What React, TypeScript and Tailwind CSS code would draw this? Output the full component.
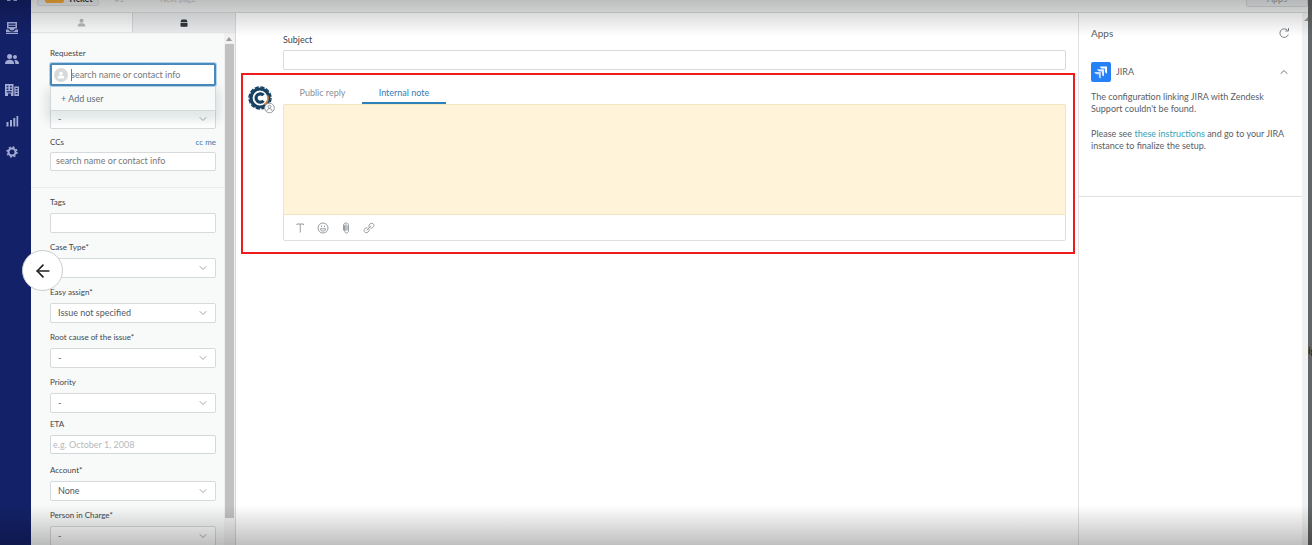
import { ReactNode } from "react";
import { ArrowLeft, ChevronDown, ChevronUp } from "lucide-react";

const boxStyle =
  "block w-full rounded-[2px] border border-[#d6dadd] bg-white text-[9px] text-[#53595e] outline-none placeholder:text-[#74797d]";

function NavIcon({ label, children }: { label: string; children: ReactNode }) {
  return (
    <a href="#" aria-label={label} className="flex h-[31px] w-6 shrink-0 items-center justify-center">
      <svg viewBox="0 0 14 14" className="size-[14px]" fill="currentColor">
        {children}
      </svg>
    </a>
  );
}

function SideNav() {
  return (
    <nav className="flex w-[31px] shrink-0 flex-col bg-[#132168] text-[#a3abd3]">
      <div className="flex h-3 flex-col justify-end overflow-hidden">
        <NavIcon label="Home">
          <path d="M7 0l7 6h-2v5H8.500V7h-3v4H2V6H0z" />
        </NavIcon>
      </div>
      <NavIcon label="Views">
        <path
          fillRule="evenodd"
          d="M2 1h10v6.500H9.800a3 3 0 0 1-5.600 0H2zM3.500 2.500v1.200h7V2.500zm0 2.300V6h7V4.800zM1 8.600h2.300a4.200 4.200 0 0 0 7.400 0H13V11H1zM1 11.800h12V13H1z"
        />
      </NavIcon>
      <NavIcon label="Customers">
        <circle cx="4.600" cy="4.500" r="2.500" />
        <path d="M0 12c0-3 2-4.300 4.600-4.300S9.200 9 9.200 12z" />
        <circle cx="10" cy="5" r="2" />
        <path d="M9.600 8c2.700-.3 4.400 1 4.400 4h-3.700c0-1.700-.2-2.900-1.300-3.900z" />
      </NavIcon>
      <NavIcon label="Organizations">
        <path
          fillRule="evenodd"
          d="M0 1h8.500v12H6v-2.500H3V13H0zm1.700 1.700v1.500h1.700V2.700zm3.300 0v1.500h1.700V2.700zM1.700 5.500V7h1.700V5.500zm3.300 0V7h1.700V5.500zM1.700 8.200v1.200h5V8.200zM9.300 3.500H14V13H9.300zm1.300 1.400v1.300h2V4.900zm0 2.500v1.300h2V7.400zm0 2.500v1.400h2V9.900z"
        />
      </NavIcon>
      <NavIcon label="Reporting">
        <path d="M1.500 8h2v4.500h-2zM5 6h2v6.500H5zM8.300 4h2v8.500h-2zM11.500 2h1.700v10.500h-1.700z" />
      </NavIcon>
      <NavIcon label="Admin">
        <g fill="none" stroke="currentColor">
          <circle cx="7" cy="7" r="3.500" strokeWidth="2" />
          <circle cx="7" cy="7" r="4.900" strokeWidth="1.600" strokeDasharray="1.925 1.925" />
        </g>
      </NavIcon>
    </nav>
  );
}

function TopBar() {
  return (
    <header className="flex h-[13px] shrink-0 items-end justify-between overflow-hidden border-b border-[#d8d9da] bg-[#f2f3f3]">
      <div className="flex items-end gap-4 pb-[6px] pl-[6px]">
        <div className="flex h-6 items-end gap-1 rounded-[2px] border border-[#dadcde] bg-[#e9ebec] pr-[5px] pb-[2px] pl-[7px]">
          <span className="h-4 w-[19px] rounded-[2px] bg-[#f5ab36]" />
          <span className="text-[9px] leading-[9px] font-bold text-[#33393d]">Ticket</span>
        </div>
        <span className="pb-[3px] text-[8px] leading-[8px] text-[#c3c6c8]">#1</span>
        <span className="pb-[3px] pl-5 text-[8px] leading-[8px] text-[#c3c6c8]">Next page</span>
      </div>
      <button className="mb-[5px] flex h-6 w-[62px] items-end justify-center rounded-[2px] border border-[#d3d6d8] bg-[#e9ebec] pb-[3px] text-[9px] leading-[9px] text-[#9a9ea1]">
        Apps
      </button>
    </header>
  );
}

function FieldLabel({ htmlFor, children }: { htmlFor: string; children: ReactNode }) {
  return (
    <label htmlFor={htmlFor} className="block text-[8px] leading-3 text-[#3f464b]">
      {children}
    </label>
  );
}

function SelectBox({ id, value, label }: { id: string; value: string; label?: string }) {
  return (
    <div className="relative">
      <select id={id} aria-label={label} className={`${boxStyle} h-5 appearance-none px-[7px]`}>
        <option>{value}</option>
      </select>
      <ChevronDown
        className="pointer-events-none absolute top-1 right-[7px] size-3 text-[#82898d]"
        strokeWidth={1.5}
      />
    </div>
  );
}

function SelectField({ id, label, value }: { id: string; label: string; value: string }) {
  return (
    <div className="flex flex-col gap-[5px] pt-2">
      <FieldLabel htmlFor={id}>{label}</FieldLabel>
      <SelectBox id={id} value={value} />
    </div>
  );
}

function PersonGlyph({ className }: { className: string }) {
  return (
    <svg viewBox="0 0 10 10" className={className} fill="currentColor">
      <circle cx="5" cy="3" r="2.200" />
      <path d="M1 9.500V8c0-1.500 1.300-2 3-2.300h2C7.700 6 9 6.500 9 8v1.500z" />
    </svg>
  );
}

function TicketFields() {
  return (
    <aside className="flex w-[205px] shrink-0 flex-col border-r border-[#d5d7d9] bg-[#f8f9f9]">
      <div className="flex h-5 shrink-0 border-b border-[#e4e6e7]">
        <button aria-label="Requester tab" className="flex w-[101px] items-center justify-center text-[#b5b8ba]">
          <PersonGlyph className="size-[9px]" />
        </button>
        <button
          aria-label="Ticket tab"
          className="flex flex-1 items-center justify-center border-l border-[#d3d6d8] bg-[#e9ebed] text-[#30363a]"
        >
          <svg viewBox="0 0 8 8" className="size-2" fill="currentColor">
            <path d="M1.500 .5h5L7.500 3h-7zM.5 3.700h7v3.300a.7.700 0 0 1-.7.700H1.200a.7.700 0 0 1-.7-.7z" />
          </svg>
        </button>
      </div>

      <div className="flex min-h-0 flex-1">
        <form className="min-w-0 flex-1 overflow-hidden">
          <div className="border-b border-[#ebeced] pt-[14px] pr-2 pb-4 pl-[19px]">
            <FieldLabel htmlFor="requester">Requester</FieldLabel>
            <div className="relative mt-1">
              <input
                id="requester"
                placeholder="search name or contact info"
                className="block h-[23px] w-full rounded-[2px] border-2 border-[#4a88ba] bg-white pl-[19px] text-[9px] shadow-[0_0_0_1px_#b3d4ee] outline-none placeholder:text-[#74797d]"
              />
              <span className="absolute top-[5px] left-1 flex size-[14px] items-center justify-center rounded-full bg-[#d8d9da] text-white">
                <PersonGlyph className="size-2" />
              </span>
              <span className="absolute top-[6px] left-[21px] h-3 w-px bg-[#73797d]" />
              <button
                type="button"
                className="absolute top-6 right-0 left-0 z-10 flex h-6 items-center rounded-b-[2px] border border-t-0 border-[#d3d7da] bg-[#f8f9f9] px-[10px] text-[9px] text-[#626d76] shadow-[0_6px_10px_4px_rgba(40,80,85,0.13)]"
              >
                + Add user
              </button>
            </div>
            <div className="pt-[23px]">
              <SelectBox id="assignee" label="Assignee" value="-" />
            </div>
            <div className="flex justify-between pt-[7px]">
              <FieldLabel htmlFor="ccs">CCs</FieldLabel>
              <a href="#" className="text-[8px] leading-3 text-[#3a78ad]">
                cc me
              </a>
            </div>
            <input
              id="ccs"
              placeholder="search name or contact info"
              className={`${boxStyle} mt-1 h-[19px] px-[5px] pb-[2px]`}
            />
          </div>

          <div className="pr-2 pl-[19px]">
            <div className="flex flex-col gap-[5px] pt-2">
              <FieldLabel htmlFor="tags">Tags</FieldLabel>
              <input id="tags" className={`${boxStyle} h-5 px-[5px]`} />
            </div>
            <SelectField id="case-type" label="Case Type*" value="" />
            <SelectField id="easy-assign" label="Easy assign*" value="Issue not specified" />
            <SelectField id="root-cause" label="Root cause of the issue*" value="-" />
            <SelectField id="priority" label="Priority" value="-" />
            <div className="flex flex-col gap-[5px] pt-[5px] pb-[2px]">
              <FieldLabel htmlFor="eta">ETA</FieldLabel>
              <input
                id="eta"
                placeholder="e.g. October 1, 2008"
                className="block h-[19px] w-full rounded-[2px] border border-[#d3d7da] bg-white px-[2px] text-[9px] outline-none placeholder:text-[#b6babd]"
              />
            </div>
            <SelectField id="account" label="Account*" value="None" />
            <SelectField id="person" label="Person in Charge*" value="-" />
          </div>
        </form>

        <div className="flex w-[11px] shrink-0 flex-col items-center bg-[#f1f1f1] pr-px">
          <span className="mt-1 mb-[3px] border-x-[3px] border-b-4 border-x-transparent border-b-[#9b9b9b]" />
          <span className="mb-[27px] w-[9px] flex-1 bg-[#c1c1c1]" />
        </div>
      </div>
    </aside>
  );
}

function AgentAvatar() {
  return (
    <svg viewBox="0 0 27 28" className="h-7 w-[27px] shrink-0">
      <circle cx="12" cy="12" r="9" fill="#fff" stroke="#174260" strokeWidth="3.200" />
      <circle cx="12" cy="12" r="11" fill="none" stroke="#174260" strokeWidth="1.400" strokeDasharray="4.200 1.560" />
      <path d="M19.500 9.500a8 8 0 0 1-3 9" fill="none" stroke="#e08a3c" strokeWidth="1.600" />
      <path d="M15.500 9.300a4.200 4.200 0 1 0 0 5.400" fill="none" stroke="#174260" strokeWidth="3.200" />
      <circle cx="21.500" cy="22" r="4.800" fill="#fff" stroke="#8b9196" strokeWidth=".9" />
      <circle cx="21.500" cy="20.700" r="1.500" fill="none" stroke="#777e83" strokeWidth=".8" />
      <path d="M18.900 25c.2-3.200 5-3.200 5.200 0" fill="none" stroke="#777e83" strokeWidth=".8" />
    </svg>
  );
}

function ToolButton({ label, children }: { label: string; children: ReactNode }) {
  return (
    <button aria-label={label} className="flex size-3 items-center justify-center">
      <svg viewBox="0 0 12 12" className="size-3" fill="none" stroke="currentColor" strokeWidth=".9">
        {children}
      </svg>
    </button>
  );
}

function Conversation() {
  return (
    <main className="min-w-0 flex-1 bg-white pr-[3px] pl-[5px]">
      <div className="flex flex-col gap-1 pt-[21px] pr-[9px] pb-[3px] pl-[42px]">
        <label htmlFor="subject" className="text-[9px] leading-3 text-[#3f464b]">
          Subject
        </label>
        <input id="subject" className={`${boxStyle} h-5 px-2`} />
      </div>

      <section className="flex gap-2 border-2 border-[#f01b1d] pt-2 pr-[7px] pb-[11px] pl-[5px]">
        <div className="pt-[3px]">
          <AgentAvatar />
        </div>
        <div className="min-w-0 flex-1">
          <div className="flex h-[21px] text-[9px]">
            <button className="w-[79px] pb-px text-[#8a9094]">Public reply</button>
            <button className="w-[84px] border-b-2 border-[#2f7fb8] text-[#347bb8]">Internal note</button>
          </div>
          <div className="rounded-[2px] border border-[#dcdfe1]">
            <textarea
              aria-label="Internal note"
              className="-mx-px -mt-px block h-[111px] w-[calc(100%+2px)] resize-none rounded-t-[2px] border border-[#f1e4c0] bg-[#fff4d9] outline-none"
            />
            <div className="flex h-[25px] items-center gap-[11px] px-[10px] text-[#8b9196]">
              <ToolButton label="Text style">
                <path d="M3 3V2h6.500v1M6.250 2v8.500" />
              </ToolButton>
              <ToolButton label="Emoji">
                <circle cx="6" cy="6" r="5" />
                <path d="M3.200 6.800c.6 3 5 3 5.600 0zM4.500 3.500v1.700M7.500 3.500v1.700" />
              </ToolButton>
              <ToolButton label="Attach file">
                <path d="M3.500 8.500V3.200C3.500.2 8.500.2 8.500 3.200v5.300c0 3.300-4 3.300-4 0V4c0-1.700 2.600-1.700 2.600 0v4.500M5.800 4v5" />
              </ToolButton>
              <ToolButton label="Insert link">
                <path d="M6.300 5.500c-1-1.300-.5-2.300.7-3.500 2.200-2.200 5.400.8 3.300 3C9.500 6 8.700 6.500 7.500 6M5.700 6.500c1 1.300.5 2.300-.7 3.500-2.200 2.200-5.400-.8-3.300-3C2.500 6 3.300 5.500 4.500 6M3.800 8.200l4.400-4.400" />
              </ToolButton>
            </div>
          </div>
        </div>
      </section>
    </main>
  );
}

function JiraLogo() {
  return (
    <svg viewBox="0 0 20 20" className="size-5">
      <rect width="20" height="20" rx="2" fill="#2581f7" />
      <g fill="#fff">
        <path d="M9 4.500h7v7c-1.500-.3-2.100-1.200-2.100-2.500V6.600h-2.400C10.200 6.600 9.300 6 9 4.500z" />
        <path d="M6.200 7.300H13v6.900c-1.500-.3-2.100-1.200-2.100-2.500V9.400H8.700C7.400 9.400 6.500 8.800 6.200 7.300z" opacity=".85" />
        <path d="M3.400 10.100h6.400v6.500c-1.300-.3-1.900-1.200-1.900-2.300v-2.100H5.800c-1.300 0-2.100-.7-2.400-2.100z" opacity=".75" />
      </g>
    </svg>
  );
}

function AppsPanel() {
  return (
    <aside className="w-[224px] shrink-0 border-l border-[#dfe1e3] bg-white text-[#5a6065]">
      <div className="border-b border-[#dfe1e3] pt-[13px] pr-3 pb-[44px] pl-3">
        <div className="flex items-center justify-between">
          <h2 className="text-[10px] leading-[14px]">Apps</h2>
          <button aria-label="Reload apps" className="text-[#7b8286]">
            <svg viewBox="0 0 12 12" className="size-3" fill="none" stroke="currentColor">
              <path d="M10.300 7.500a4.300 4.300 0 1 1-.8-4.200M10.500 1v3H7.300" />
            </svg>
          </button>
        </div>
        <div className="flex items-center gap-[5px] pt-[22px]">
          <JiraLogo />
          <h3 className="flex-1 text-[9px]">JIRA</h3>
          <button aria-label="Collapse JIRA">
            <ChevronUp className="size-3 text-[#6d7478]" />
          </button>
        </div>
        <div className="flex flex-col gap-[13px] pt-[9px] text-[9px] leading-3">
          <p>
            The configuration linking JIRA with Zendesk
            <br />
            Support couldn't be found.
          </p>
          <p className="whitespace-nowrap">
            Please see{" "}
            <a href="#" className="text-[#379fb4]">
              these instructions
            </a>{" "}
            and go to your JIRA
            <br />
            instance to finalize the setup.
          </p>
        </div>
      </div>
    </aside>
  );
}

export default function App() {
  return (
    <div className="relative flex h-screen overflow-hidden font-['Lato','Open_Sans',sans-serif]">
      <SideNav />
      <div className="flex min-w-0 flex-1 flex-col">
        <TopBar />
        <div className="flex min-h-0 flex-1">
          <TicketFields />
          <Conversation />
          <AppsPanel />
          <div className="flex w-[6px] shrink-0 flex-col items-end overflow-hidden bg-[#f1f1f1] pt-1">
            <span className="border-b-4 border-l-4 border-b-[#9b9b9b] border-l-transparent" />
          </div>
        </div>
      </div>
      <div className="flex w-1 shrink-0 flex-col justify-center overflow-hidden bg-[#626567] pt-[155px] text-[10px] leading-4 font-bold text-[#25282a]">
        ig
      </div>

      <button
        aria-label="Back"
        className="absolute top-[250px] left-[22px] z-30 flex size-[41px] items-center justify-center rounded-full border border-[#c9cbcd] bg-white text-[#1f2224]"
      >
        <ArrowLeft className="size-5" />
      </button>

      <div className="pointer-events-none absolute inset-x-0 top-0 z-20 h-9 bg-linear-to-b from-black/22 to-transparent" />
      <div className="pointer-events-none absolute inset-x-0 bottom-0 z-20 h-10 bg-linear-to-t from-black/25 to-transparent" />
    </div>
  );
}
